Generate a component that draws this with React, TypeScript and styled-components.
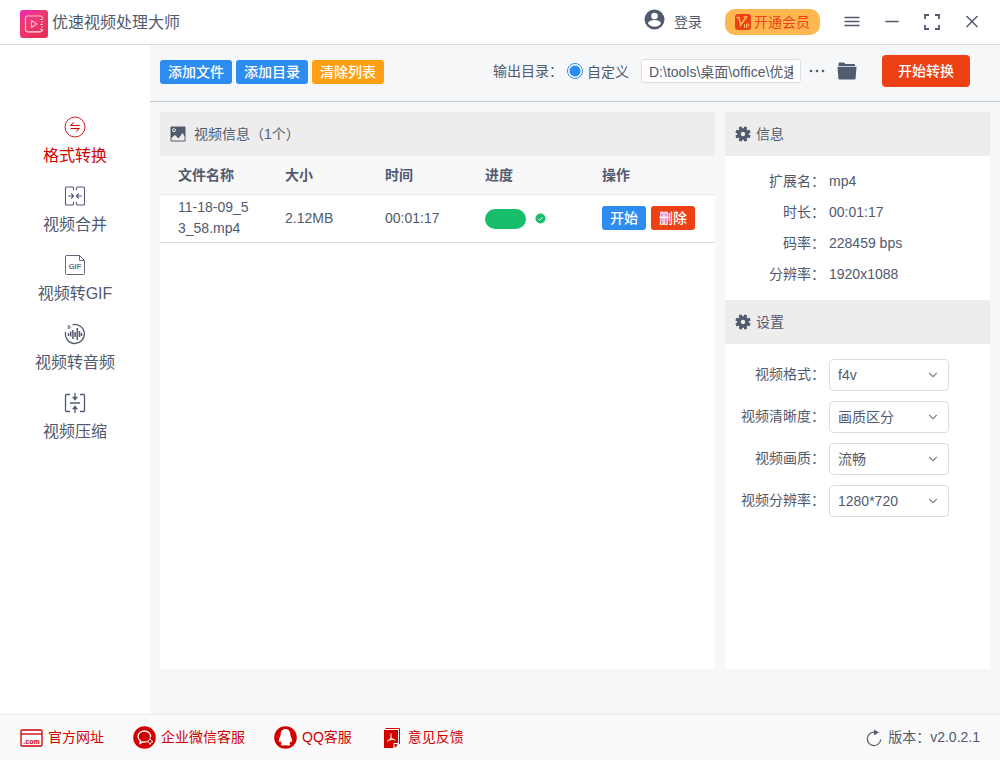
import React, { useState } from 'react';
import styled, { createGlobalStyle } from 'styled-components';
import { ChevronDown } from 'lucide-react';

const ink = '#515a6e';
const red = '#d10000';

const GlobalStyle = createGlobalStyle`
  *, *::before, *::after { box-sizing: border-box; }
  body { margin: 0; }
  body, button, input, select {
    font-family: "Liberation Sans", "Noto Sans CJK SC", sans-serif;
    font-size: 14px;
    font-weight: 400;
    color: ${ink};
  }
  svg { display: block; flex: none; }
`;

const Window = styled.div`
  display: flex;
  flex-direction: column;
  min-height: 100vh;
  background: #fff;
`;

const Header = styled.header`
  display: flex;
  align-items: center;
  height: 45px;
  padding: 0 8px 0 20px;
  border-bottom: 1px solid #dcdcdc;
  background: #fff;
`;

const Brand = styled.h1`
  display: flex;
  align-items: center;
  gap: 4px;
  margin: 3px auto 0 0;
  font-size: 16px;
  line-height: 24px;
  font-weight: 400;
`;

const BrandName = styled.span`
  padding-bottom: 2px;
`;

const PlainButton = styled.button`
  display: flex;
  align-items: center;
  justify-content: center;
  padding: 0;
  border: 0;
  background: none;
  cursor: pointer;
`;

const LoginButton = styled(PlainButton)`
  gap: 9px;
  margin-right: 23px;
  padding-bottom: 2px;
`;

const VipButton = styled(PlainButton)`
  gap: 3px;
  height: 26px;
  margin-right: 12px;
  padding: 0 10px;
  border-radius: 10px;
  background: #ffb851;
  color: #ed4014;
`;

const IconLabel = styled.span`
  padding-bottom: 3px;
`;

const WindowButton = styled(PlainButton)`
  width: 40px;
  height: 40px;
`;

const Body = styled.div`
  display: flex;
  flex: 1;
`;

const Sidebar = styled.nav`
  display: flex;
  flex-direction: column;
  flex: none;
  gap: 17px;
  width: 150px;
  padding-top: 71px;
  background: #fff;
`;

const NavItem = styled.a<{ $active?: boolean }>`
  display: flex;
  flex-direction: column;
  align-items: center;
  gap: 6px;
  font-size: 16px;
  line-height: 24px;
  text-decoration: none;
  color: ${(p) => (p.$active ? red : ink)};
`;

const Main = styled.main`
  display: flex;
  flex-direction: column;
  flex: 1;
  min-width: 0;
  background: #f5f7f9;
`;

const Toolbar = styled.div`
  display: flex;
  align-items: center;
  gap: 4px;
  height: 57px;
  padding: 0 30px 4px 10px;
  border-bottom: 1px solid #c5c8ce;
`;

const ButtonGroup = styled.div`
  display: flex;
  gap: 4px;
  padding-top: 2px;
`;

const tones = { blue: '#2d8cf0', orange: '#ff9f14', red: '#ed4014' };

const ActionButton = styled.button<{ $tone: keyof typeof tones; $large?: boolean }>`
  flex: none;
  height: ${(p) => (p.$large ? 32 : 24)}px;
  padding: 0 ${(p) => (p.$large ? 16 : 8)}px;
  border: 0;
  border-radius: ${(p) => (p.$large ? 4 : 3)}px;
  background: ${(p) => tones[p.$tone]};
  color: #fff;
  font-weight: 500;
  line-height: 20px;
  cursor: pointer;
`;

const OutputGroup = styled.div`
  display: flex;
  align-items: center;
  gap: 4px;
  margin-left: auto;
  white-space: nowrap;
`;

const Radio = styled.input`
  appearance: none;
  width: 16px;
  height: 16px;
  margin: 0;
  border: 1px solid #2d8cf0;
  border-radius: 50%;
  background: radial-gradient(circle, #2d8cf0 5px, #fff 6px);
`;

const RadioLabel = styled.label`
  display: flex;
  align-items: center;
  gap: 4px;
  margin-right: 8px;
`;

const PathInput = styled.input`
  width: 160px;
  height: 24px;
  padding: 1px 7px;
  border: 1px solid #dcdee2;
  border-radius: 3px;
  background: #fff;
`;

const BrowseButton = styled(PlainButton)`
  margin-left: 4px;
`;

const FolderButton = styled(PlainButton)`
  margin: 0 21px 0 8px;
`;

const Workspace = styled.div`
  display: flex;
  flex: 1;
  gap: 10px;
  padding: 10px 10px 45px;
`;

const Panel = styled.section`
  background: #fff;
`;

const FilePanel = styled(Panel)`
  flex: 1;
  min-width: 0;
`;

const SidePanel = styled(Panel)`
  flex: none;
  width: 265px;
`;

const PanelTitle = styled.h2<{ $gap: number }>`
  display: flex;
  align-items: center;
  gap: ${(p) => p.$gap}px;
  height: 44px;
  margin: 0;
  padding: 0 10px;
  background: #ededed;
  font-size: 14px;
  font-weight: 400;
`;

const FileTable = styled.table`
  width: 100%;
  table-layout: fixed;
  border-collapse: separate;
  border-spacing: 0;
`;

const HeadCell = styled.th<{ $width?: number }>`
  width: ${(p) => (p.$width ? `${p.$width}px` : 'auto')};
  height: 39px;
  padding: 0 0 2px 18px;
  border-bottom: 1px solid #e8eaec;
  background: #f8f8f9;
  text-align: left;
  font-weight: 700;
`;

const Cell = styled.td`
  height: 48px;
  padding: 2px 14px 3px 18px;
  border-bottom: 1px solid #dcdee2;
  line-height: 21px;
  word-break: break-all;
`;

const ProgressRow = styled.div`
  display: flex;
  align-items: center;
  gap: 9px;
  padding-top: 1px;
`;

const Progress = styled.div`
  width: 41px;
  height: 20px;
  border-radius: 10px;
  background: #19be6b;
`;

const RowActions = styled.div`
  display: flex;
  gap: 5px;
`;

const InfoList = styled.dl`
  display: grid;
  grid-template-columns: 100px 1fr;
  column-gap: 4px;
  margin: 0;
  padding: 10px 0;
  line-height: 31px;
`;

const InfoName = styled.dt`
  text-align: right;
`;

const InfoValue = styled.dd`
  margin: 0;
`;

const Settings = styled.form`
  display: grid;
  gap: 10px;
  padding: 15px 0;
`;

const Field = styled.div`
  display: grid;
  grid-template-columns: 100px 120px;
  column-gap: 4px;
`;

const FieldLabel = styled.label`
  line-height: 30px;
  text-align: right;
`;

const SelectBox = styled.div`
  display: grid;
  align-items: center;
  > * { grid-area: 1 / 1; }
  > svg { justify-self: end; margin-right: 9px; pointer-events: none; }
`;

const Select = styled.select`
  appearance: none;
  width: 100%;
  height: 32px;
  padding: 0 24px 0 8px;
  border: 1px solid #dcdee2;
  border-radius: 4px;
  background: #fff;
`;

const Footer = styled.footer`
  display: flex;
  align-items: center;
  gap: 29px;
  height: 46px;
  padding: 0 20px;
  border-top: 1px solid #e8eaec;
  background: #fafafa;
`;

const FooterLink = styled.a`
  display: flex;
  align-items: center;
  gap: 5px;
  color: ${red};
  text-decoration: none;
`;

const Version = styled.span`
  display: flex;
  align-items: center;
  gap: 6px;
  margin-left: auto;
`;

const LogoIcon = () => (
  <svg width="28" height="28" viewBox="0 0 28 28" fill="none">
    <defs>
      <linearGradient id="logo" x1="0" y1="0" x2="0.6" y2="0.9">
        <stop offset="0" stopColor="#ea2bb0" />
        <stop offset="0.5" stopColor="#ee3a72" />
        <stop offset="1" stopColor="#e8305c" />
      </linearGradient>
    </defs>
    <rect width="28" height="28" rx="3" fill="url(#logo)" />
    <path d="M22.500 8.500V8a2 2 0 0 0-2-2H7.500a2 2 0 0 0-2 2v11.500a2 2 0 0 0 2 2h13a2 2 0 0 0 2-2V19" stroke="#fbb6cd" strokeWidth="1.200" />
    <path d="M20 9.500h3M21 12h2M20 14.500h3M21 17h2M20 19.500h3" stroke="#fbb6cd" />
    <path d="M11.500 10.500v7l5.500-3.500z" stroke="#fbb6cd" strokeWidth="1.200" strokeLinejoin="round" />
    <path d="M7 22.500h14" stroke="#f78aa8" />
  </svg>
);

const UserIcon = () => (
  <svg width="21" height="24" viewBox="0 0 21 24">
    <circle cx="10.500" cy="10.500" r="10" fill={ink} />
    <circle cx="10.500" cy="7" r="3.300" fill="#fff" />
    <path d="M4 14.500c.5-2.600 4-3.500 6.500-3.500s6 .9 6.500 3.500c-1.500 2.200-4 3.300-6.500 3.300S5.500 16.700 4 14.500z" fill="#fff" />
  </svg>
);

const VipIcon = () => (
  <svg width="16" height="16" viewBox="0 0 16 16" fill="none">
    <rect width="16" height="16" rx="3" fill="#ed4014" />
    <path d="M1.500 3.500h2.500l1.500 7.500L11.500 3h-3" stroke="#ffb851" strokeWidth="1.600" />
    <path d="M9.500 10v4M11.500 14v-4h1.500a1 1 0 0 1 0 2.200h-1.500" stroke="#ffb851" strokeWidth="1" />
  </svg>
);

const MenuIcon = () => (
  <svg width="16" height="12" viewBox="0 0 16 12" stroke={ink} strokeWidth="1.400">
    <path d="M.5 1.500h15M.5 5.500h15M.5 9.500h15" />
  </svg>
);

const MinimizeIcon = () => (
  <svg width="14" height="4" viewBox="0 0 14 4" stroke={ink} strokeWidth="1.500">
    <path d="M.5 1.500h13" />
  </svg>
);

const FullscreenIcon = () => (
  <svg width="16" height="16" viewBox="0 0 16 16" fill="none" stroke={ink} strokeWidth="1.800">
    <path d="M1 5V1h4M11 1h4v4M15 11v4h-4M5 15H1v-4" />
  </svg>
);

const CloseIcon = () => (
  <svg width="12" height="12" viewBox="0 0 12 12" stroke={ink} strokeWidth="1.500">
    <path d="M.5 0l11 11M11.500 0l-11 11" />
  </svg>
);

const ConvertIcon = () => (
  <svg width="22" height="22" viewBox="0 0 22 22" fill="none" stroke={red}>
    <circle cx="11" cy="11" r="10" strokeWidth=".9" />
    <path d="M15.500 9.500h-9L10 6.500M6.500 12.500h9L12 15.500" strokeWidth="1" />
  </svg>
);

const MergeIcon = () => (
  <svg width="22" height="22" viewBox="0 0 22 22" fill="none" stroke={ink} strokeWidth="1.100">
    <path d="M9.500 5V3a1 1 0 0 0-1-1h-6a1 1 0 0 0-1 1v16a1 1 0 0 0 1 1h6a1 1 0 0 0 1-1v-2M12.500 5V3a1 1 0 0 1 1-1h6a1 1 0 0 1 1 1v16a1 1 0 0 1-1 1h-6a1 1 0 0 1-1-1v-2" />
    <path d="M4 11h5.500M7.200 8.500L9.600 11l-2.400 2.500M18 11h-5.500M14.800 8.500L12.400 11l2.400 2.500" />
  </svg>
);

const GifIcon = () => (
  <svg width="22" height="22" viewBox="0 0 22 22" fill="none" stroke={ink}>
    <path d="M15.500 1.500H2.500a1 1 0 0 0-1 1v17a1 1 0 0 0 1 1h17a1 1 0 0 0 1-1V6.500zM15.500 1.500v5h5" strokeWidth=".9" />
    <text x="11" y="15" textAnchor="middle" fontSize="7.500" fontWeight="400" fill={ink} stroke={ink} strokeWidth=".2">GIF</text>
  </svg>
);

const AudioIcon = () => (
  <svg width="22" height="22" viewBox="0 0 22 22" fill="none" stroke={ink}>
    <path d="M8.500 1.800A9.500 9.500 0 1 1 1.600 9" strokeWidth="1.300" />
    <path d="M4 5.500L6.500 4.800 4.500 2z" strokeWidth=".8" />
    <path d="M4.500 10v3M6.700 8.500v5M8.900 7v9M11.100 9v5M13.300 5v12M15.500 8v6M17.500 10v3" strokeWidth="1.500" />
  </svg>
);

const CompressIcon = () => (
  <svg width="22" height="22" viewBox="0 0 22 22" fill="none" stroke={ink} strokeWidth="1.300">
    <path d="M6 2.500H2.500a1 1 0 0 0-1 1v15a1 1 0 0 0 1 1H6M16 2.500h3.500a1 1 0 0 1 1 1v15a1 1 0 0 1-1 1H16M6 11h10M11 1v5M11 21v-5" />
    <path d="M8 4.800h6L11 8.800zM8 17.200h6L11 13.200z" fill={ink} stroke="none" />
  </svg>
);

const DotsIcon = () => (
  <svg width="16" height="16" viewBox="0 0 16 16" fill={ink}>
    <circle cx="2" cy="8" r="1.300" />
    <circle cx="8" cy="8" r="1.300" />
    <circle cx="14" cy="8" r="1.300" />
  </svg>
);

const FolderIcon = () => (
  <svg width="20" height="18" viewBox="0 0 20 18" fill={ink}>
    <path d="M1.500 4V1.500a1 1 0 0 1 1-1H7L8.500 2H17a1 1 0 0 1 1 1v1z" />
    <path d="M.5 4.800h19L18.600 16.500a1 1 0 0 1-1 1H2.400a1 1 0 0 1-1-1z" />
  </svg>
);

const ImageIcon = () => (
  <svg width="16" height="16" viewBox="0 0 16 16">
    <rect x=".5" y=".5" width="15" height="15" rx="1" fill={ink} />
    <circle cx="4" cy="4.200" r="1.500" stroke="#ededed" strokeWidth="1" fill={ink} />
    <path d="M1.500 14.500v-2.500L5 9l3.500 3.500L12.500 7l2 3v4.500z" fill="#ededed" />
  </svg>
);

const GearIcon = () => (
  <svg width="16" height="16" viewBox="0 0 16 16">
    <g fill={ink}>
      {[22, 67, 112, 157].map((angle) => (
        <rect key={angle} x="6.400" y="0.300" width="3.200" height="15.400" rx=".6" transform={`rotate(${angle} 8 8)`} />
      ))}
      <circle cx="8" cy="8" r="5.800" />
    </g>
    <circle cx="8" cy="8" r="2.200" fill="#ededed" />
  </svg>
);

const DoneIcon = () => (
  <svg width="11" height="11" viewBox="0 0 11 11" fill="none">
    <circle cx="5.500" cy="5.500" r="5" fill="#19be6b" />
    <path d="M3.200 5.800l1.600 1.400 3-3" stroke="#fff" strokeWidth=".8" />
  </svg>
);

const SiteIcon = () => (
  <svg width="23" height="18" viewBox="0 0 23 18" fill="none" stroke={red}>
    <rect x="1" y="1" width="21" height="16" rx="1" strokeWidth="1.300" />
    <path d="M1 5h21" strokeWidth="1.300" />
    <text x="11.500" y="14.500" textAnchor="middle" fontSize="7" fontWeight="700" fill={red} stroke="none">.com</text>
  </svg>
);

const WeComIcon = () => (
  <svg width="23" height="23" viewBox="0 0 23 23" fill="none">
    <circle cx="11.500" cy="11.500" r="11.300" fill={red} />
    <path d="M17.500 11.500C18.200 7.500 15 5 11.500 5S5 7.300 5 10.500c0 2 1 3.400 2.500 4.400L7 17.200l2.800-1.400c1.300.4 2.700.3 4-.1" stroke="#fff" strokeWidth="1.300" />
    <path d="M17 12.500l1 2 2 1-2 1-1 2-1-2-2-1 2-1z" fill={red} stroke="#fff" strokeWidth=".9" />
  </svg>
);

const QqIcon = () => (
  <svg width="23" height="23" viewBox="0 0 23 23">
    <circle cx="11.500" cy="11.500" r="11.300" fill={red} />
    <path d="M11.500 3c-3.300 0-4.800 2.400-4.800 5.500-.1 2-1.900 4-1.900 6.500 0 1 .6 1.500 1.500.2.300 1 .8 1.700 1.500 2.300-.8.400-1.200 1-.8 1.500.7.800 3.500.7 4.500-.1 1 .8 3.800.9 4.500.1.400-.5 0-1.100-.8-1.500.7-.6 1.200-1.300 1.500-2.300.9 1.300 1.500.8 1.500-.2 0-2.500-1.800-4.500-1.900-6.500C16.300 5.400 14.800 3 11.500 3z" fill="#fff" />
  </svg>
);

const FeedbackIcon = () => (
  <svg width="22" height="22" viewBox="0 0 22 22" fill="none">
    <path d="M4.500 1.500h14V17" stroke={red} strokeWidth="1" />
    <path d="M3 3h14v13l-4.500 5H3z" fill={red} />
    <path d="M13 21v-4.500h4" stroke="#fafafa" strokeWidth="1" />
    <path d="M17 17.500L14 21v-3.500z" fill={red} />
    <path d="M10 6.500v4.500l-4 3.500M10 11l4.500 2.500M8 13l5-.6" stroke="#fff" strokeWidth="1" />
  </svg>
);

const RefreshIcon = () => (
  <svg width="16" height="18" viewBox="0 0 16 18" fill="none">
    <path d="M9 3.200H7.500a6.700 6.700 0 1 0 7.200 7.300" stroke={ink} strokeWidth="1.200" />
    <path d="M8 .5l5 3-5 2.700z" fill={ink} />
  </svg>
);

const navItems = [
  { label: '格式转换', Icon: ConvertIcon },
  { label: '视频合并', Icon: MergeIcon },
  { label: '视频转GIF', Icon: GifIcon },
  { label: '视频转音频', Icon: AudioIcon },
  { label: '视频压缩', Icon: CompressIcon },
];

const columns = [
  { label: '文件名称', width: 107 },
  { label: '大小', width: 100 },
  { label: '时间', width: 100 },
  { label: '进度', width: 117 },
  { label: '操作' },
];

const info = [
  ['扩展名：', 'mp4'],
  ['时长：', '00:01:17'],
  ['码率：', '228459 bps'],
  ['分辨率：', '1920x1088'],
];

const settings = [
  { id: 'format', label: '视频格式：', options: ['f4v', 'mp4', 'avi'] },
  { id: 'clarity', label: '视频清晰度：', options: ['画质区分'] },
  { id: 'quality', label: '视频画质：', options: ['流畅', '高清'] },
  { id: 'resolution', label: '视频分辨率：', options: ['1280*720', '1920*1080'] },
];

const footerLinks = [
  { label: '官方网址', Icon: SiteIcon },
  { label: '企业微信客服', Icon: WeComIcon },
  { label: 'QQ客服', Icon: QqIcon },
  { label: '意见反馈', Icon: FeedbackIcon },
];

export default function App() {
  const [active, setActive] = useState(0);
  const [path, setPath] = useState('D:\\tools\\桌面\\office\\优速视频处理大师');

  return (
    <Window>
      <GlobalStyle />
      <Header>
        <Brand>
          <LogoIcon />
          <BrandName>优速视频处理大师</BrandName>
        </Brand>
        <LoginButton type="button"><UserIcon />登录</LoginButton>
        <VipButton type="button"><VipIcon /><IconLabel>开通会员</IconLabel></VipButton>
        <WindowButton type="button" aria-label="菜单"><MenuIcon /></WindowButton>
        <WindowButton type="button" aria-label="最小化"><MinimizeIcon /></WindowButton>
        <WindowButton type="button" aria-label="全屏"><FullscreenIcon /></WindowButton>
        <WindowButton type="button" aria-label="关闭"><CloseIcon /></WindowButton>
      </Header>

      <Body>
        <Sidebar>
          {navItems.map(({ label, Icon }, i) => (
            <NavItem key={label} href="#" $active={i === active} onClick={() => setActive(i)}>
              <Icon />
              {label}
            </NavItem>
          ))}
        </Sidebar>

        <Main>
          <Toolbar>
            <ButtonGroup>
              <ActionButton type="button" $tone="blue">添加文件</ActionButton>
              <ActionButton type="button" $tone="blue">添加目录</ActionButton>
              <ActionButton type="button" $tone="orange">清除列表</ActionButton>
            </ButtonGroup>
            <OutputGroup>
              <IconLabel>输出目录：</IconLabel>
              <RadioLabel>
                <Radio type="radio" name="output" defaultChecked />
                自定义
              </RadioLabel>
              <PathInput aria-label="输出目录" value={path} onChange={(e) => setPath(e.target.value)} />
              <BrowseButton type="button" aria-label="浏览"><DotsIcon /></BrowseButton>
              <FolderButton type="button" aria-label="打开文件夹"><FolderIcon /></FolderButton>
              <ActionButton type="button" $tone="red" $large>开始转换</ActionButton>
            </OutputGroup>
          </Toolbar>

          <Workspace>
            <FilePanel>
              <PanelTitle $gap={8}><ImageIcon /><IconLabel>视频信息（1个）</IconLabel></PanelTitle>
              <FileTable>
                <thead>
                  <tr>
                    {columns.map((c) => (
                      <HeadCell key={c.label} $width={c.width}>{c.label}</HeadCell>
                    ))}
                  </tr>
                </thead>
                <tbody>
                  <tr>
                    <Cell>11-18-09_53_58.mp4</Cell>
                    <Cell>2.12MB</Cell>
                    <Cell>00:01:17</Cell>
                    <Cell>
                      <ProgressRow>
                        <Progress role="progressbar" aria-label="进度" aria-valuenow={100} />
                        <DoneIcon />
                      </ProgressRow>
                    </Cell>
                    <Cell>
                      <RowActions>
                        <ActionButton type="button" $tone="blue">开始</ActionButton>
                        <ActionButton type="button" $tone="red">删除</ActionButton>
                      </RowActions>
                    </Cell>
                  </tr>
                </tbody>
              </FileTable>
            </FilePanel>

            <SidePanel>
              <PanelTitle $gap={5}><GearIcon /><IconLabel>信息</IconLabel></PanelTitle>
              <InfoList>
                {info.map(([name, value]) => (
                  <React.Fragment key={name}>
                    <InfoName>{name}</InfoName>
                    <InfoValue>{value}</InfoValue>
                  </React.Fragment>
                ))}
              </InfoList>
              <PanelTitle $gap={5}><GearIcon /><IconLabel>设置</IconLabel></PanelTitle>
              <Settings>
                {settings.map((s) => (
                  <Field key={s.id}>
                    <FieldLabel htmlFor={s.id}>{s.label}</FieldLabel>
                    <SelectBox>
                      <Select id={s.id}>
                        {s.options.map((o) => <option key={o}>{o}</option>)}
                      </Select>
                      <ChevronDown size={14} color="#808695" />
                    </SelectBox>
                  </Field>
                ))}
              </Settings>
            </SidePanel>
          </Workspace>
        </Main>
      </Body>

      <Footer>
        {footerLinks.map(({ label, Icon }) => (
          <FooterLink key={label} href="#"><Icon /><IconLabel>{label}</IconLabel></FooterLink>
        ))}
        <Version><RefreshIcon /><IconLabel>版本：v2.0.2.1</IconLabel></Version>
      </Footer>
    </Window>
  );
}
